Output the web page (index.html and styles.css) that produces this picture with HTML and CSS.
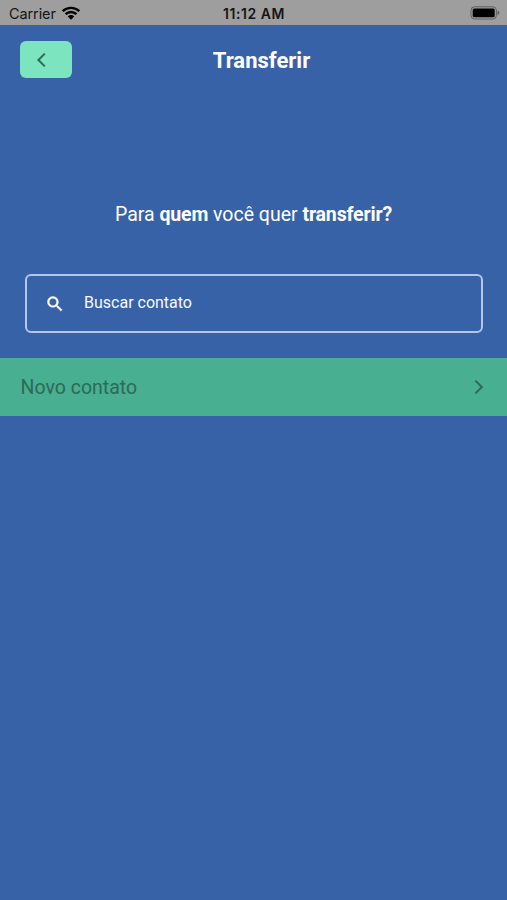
FILE: index.html
```html
<!DOCTYPE html>
<html lang="pt-BR">
<head>
  <meta charset="utf-8">
  <meta name="viewport" content="width=device-width, initial-scale=1">
  <title>Transferir</title>
  <link rel="stylesheet" href="styles.css">
</head>
<body>
  <div class="status-bar">
    <div class="carrier">
      <span class="carrier-name">Carrier</span>
      <svg class="wifi" width="20" height="14" viewBox="0 0 20 14">
        <path d="M1.7 5.2a12 12 0 0 1 16.6 0M4.6 8.2a7.8 7.8 0 0 1 10.8 0" fill="none" stroke="#000" stroke-width="2.4"/>
        <path d="M6.8 10.4a4.6 4.6 0 0 1 6.4 0L10 13.7z"/>
      </svg>
    </div>
    <span class="time">11:12 AM</span>
    <svg class="battery" width="30" height="14" viewBox="0 0 30 14">
      <rect x="1" y=".8" width="25.4" height="12.2" rx="3.5" fill="none" stroke="#606060"/>
      <rect x="2.7" y="2.5" width="22" height="8.8" rx="1.5"/>
      <path d="M27.5 4.6q2 .7 2 2.2t-2 2.2z" fill="#606060"/>
    </svg>
  </div>

  <header class="header">
    <button class="back" type="button" aria-label="Voltar">
      <svg width="10" height="16" viewBox="0 0 10 16">
        <path d="M8.8 1.6L2.4 8l6.4 6.4"/>
      </svg>
    </button>
    <h1 class="title">Transferir</h1>
  </header>

  <main>
    <p class="question">Para <b>quem</b> você quer <b>transferir?</b></p>

    <label class="search">
      <svg width="20" height="20" viewBox="0 0 24 24">
        <path d="M15.5 14h-.79l-.28-.27A6.47 6.47 0 0 0 16 9.5 6.5 6.5 0 1 0 9.5 16c1.61 0 3.09-.59 4.23-1.57l.27.28v.79l5 4.99L20.49 19l-4.99-5zm-6 0C7.01 14 5 11.99 5 9.5S7.01 5 9.5 5 14 7.01 14 9.5 11.99 14 9.5 14z"/>
      </svg>
      <input type="text" placeholder="Buscar contato">
    </label>

    <a class="new-contact">
      <span>Novo contato</span>
      <svg width="10" height="16" viewBox="0 0 10 16">
        <path d="M1.4 1.6L7.8 8l-6.4 6.4"/>
      </svg>
    </a>
  </main>
</body>
</html>
```

FILE: styles.css
```css
* {
  box-sizing: border-box;
}
body {
  margin: 0;
  min-height: 100vh;
  background: #3762a8;
  color: #fff;
  font-family: Roboto, sans-serif;
}
svg {
  display: block;
  flex-shrink: 0;
}

.status-bar {
  display: grid;
  grid-template-columns: 1fr auto 1fr;
  align-items: center;
  height: 25px;
  padding: 2px 7px 0 8px;
  background: #9e9e9e;
  color: #151515;
  font: 15px/20px Inter, sans-serif;
}
.carrier {
  display: flex;
  align-items: center;
  gap: 5px;
  padding-left: 1px;
}
.carrier-name {
  font-size: 14.5px;
  letter-spacing: -0.1px;
}
.wifi {
  margin-bottom: 2px;
}
.time {
  font-size: 14px;
  font-weight: 600;
  letter-spacing: 0.55px;
}
.battery {
  justify-self: end;
  margin-bottom: 2px;
}

.header {
  display: grid;
  grid-template-columns: 52px 1fr 52px;
  align-items: center;
  height: 69px;
  padding: 0 4px 0 20px;
}
.back {
  display: flex;
  align-items: center;
  height: 37px;
  padding: 0 0 0 16px;
  border: 0;
  border-radius: 6px;
  background: #7ce4bf;
}
.back path,
.new-contact path {
  fill: none;
  stroke: #2c6a59;
  stroke-width: 2;
}
.title {
  margin: 2px 0 0;
  font-size: 22px;
  font-weight: 700;
  line-height: 28px;
  text-align: center;
}

.question {
  margin: 107px 0 45px;
  font-size: 19.5px;
  line-height: 28px;
  text-align: center;
}
.question b {
  letter-spacing: -0.15px;
}
.search {
  display: flex;
  align-items: center;
  gap: 19px;
  height: 59px;
  margin: 0 24px 0 25px;
  padding: 0 18px;
  border: 2px solid #b4c7ea;
  border-radius: 6px;
}
.search svg {
  fill: #fff;
  stroke: #fff;
  stroke-width: 0.6;
}
.search input {
  flex: 1;
  margin-bottom: 2px;
  padding: 0;
  border: 0;
  outline: 0;
  background: none;
  color: #fff;
  font: 16px/20px Roboto, sans-serif;
}
.search input::placeholder {
  color: #f6f9ff;
}
.new-contact {
  display: flex;
  align-items: center;
  justify-content: space-between;
  height: 58px;
  margin-top: 25px;
  padding: 0 23px 0 20.6px;
  background: #48af90;
  color: #2c6a59;
  font-size: 19.5px;
}
```
